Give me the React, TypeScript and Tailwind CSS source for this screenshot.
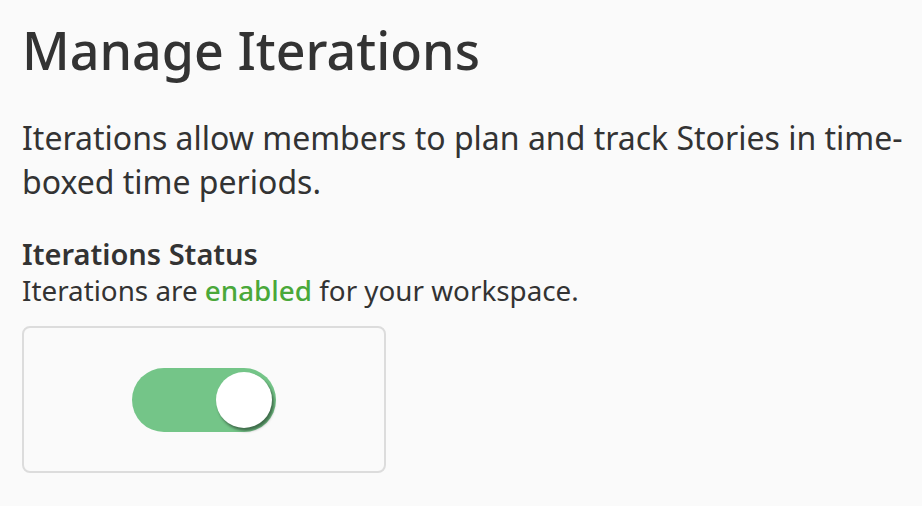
import React, { useState } from 'react';

const App: React.FC = () => {
  const [enabled, setEnabled] = useState(true);

  return (
    <div
      className="w-[922px] h-[506px] bg-[#fafafa] text-[#333333] overflow-hidden"
      style={{ fontFamily: '"Noto Sans", "Open Sans", sans-serif' }}
    >
      <div className="pl-[22px] pt-[14px]">
        <h1 className="text-[52px] leading-[72px] font-medium">Manage Iterations</h1>

        <p className="mt-[30px] text-[32px] leading-[44px] w-[895px]">
          Iterations allow members to plan and track Stories in time-boxed time periods.
        </p>

        <h2 className="mt-[32px] text-[29px] leading-[36px] font-semibold">Iterations Status</h2>
        <p className="text-[27.8px] leading-[36px]">
          Iterations are <span className="text-[#4aa83a] font-medium">enabled</span> for your workspace.
        </p>

        <div className="mt-[18px] w-[364px] h-[147px] border-2 border-[#dcdcdc] rounded-[8px] flex items-center justify-center">
          <button
            type="button"
            onClick={() => setEnabled(!enabled)}
            className={`w-[144px] h-[64px] rounded-full flex items-center px-[4px] ${
              enabled ? 'bg-[#74c588] justify-end' : 'bg-[#cfcfcf] justify-start'
            }`}
          >
            <span className="w-[56px] h-[56px] rounded-full bg-white shadow-[2px_3px_3px_rgba(0,0,0,0.45)]" />
          </button>
        </div>
      </div>
    </div>
  );
};

export default App;
